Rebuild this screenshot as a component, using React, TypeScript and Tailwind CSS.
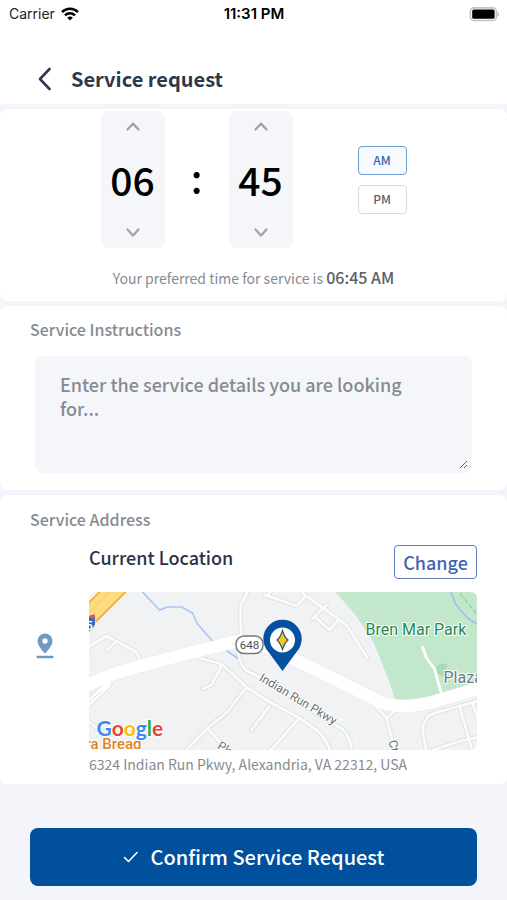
import { useState } from "react";

const pad = (n: number) => String(n).padStart(2, "0");

function Chevron({ up }: { up?: boolean }) {
  return (
    <svg width="14" height="9" viewBox="0 0 14 9" fill="none" stroke="#a0a1a4" strokeWidth="2.2" strokeLinecap="round" strokeLinejoin="round" aria-hidden="true">
      <path d={up ? "M1.5 7.5 7 1.5l5.5 6" : "M1.5 1.5 7 7.5l5.5-6"} />
    </svg>
  );
}

function Stepper({ label, value, max, min, onChange }: { label: string; value: number; max: number; min: number; onChange: (n: number) => void }) {
  return (
    <div className="flex w-16 flex-col items-center rounded-lg bg-[#f4f6fa]">
      <button type="button" aria-label={`Increase ${label}`} className="flex h-[30px] w-full items-center justify-center" onClick={() => onChange(value >= max ? min : value + 1)}>
        <Chevron up />
      </button>
      <input
        aria-label={label}
        inputMode="numeric"
        className="h-[75px] w-full bg-transparent text-center text-[39px] font-medium text-black outline-none"
        value={pad(value)}
        onChange={(e) => onChange(Math.min(max, Number(e.target.value) || min))}
      />
      <button type="button" aria-label={`Decrease ${label}`} className="flex h-8 w-full items-center justify-center" onClick={() => onChange(value <= min ? max : value - 1)}>
        <Chevron />
      </button>
    </div>
  );
}

function StatusBar() {
  return (
    <div className="grid h-7 grid-cols-3 items-center pr-2 pl-[9px] font-['Inter',sans-serif] text-sm text-black">
      <div className="flex items-center gap-1.5">
        <span className="text-[#222]">Carrier</span>
        <svg width="18" height="14" viewBox="0 0 18 14" fill="none" stroke="#000" strokeWidth="2.5" aria-hidden="true">
          <path d="M1 5.1C5.5.6 12.5.6 17 5.1" />
          <path d="M4 8.3c2.8-2.8 7.2-2.8 10 0" />
          <path d="M9 13.6 6.2 10.8a4 4 0 0 1 5.6 0Z" fill="#000" stroke="none" />
        </svg>
      </div>
      <span className="text-center text-[15px] font-semibold">11:31 PM</span>
      <svg className="justify-self-end" width="30" height="15" viewBox="0 0 30 15" aria-hidden="true">
        <rect x="1.4" y="0.9" width="26" height="12.6" rx="3.6" fill="#fff" stroke="#c4c4c4" strokeWidth="1.6" />
        <rect x="3.2" y="2.600" width="22.400" height="9.200" rx="1.6" fill="#000" />
        <path d="M28.6 5c1.6.5 1.6 4 0 4.600Z" fill="#aaa" />
      </svg>
    </div>
  );
}

const minorRoads = [
  "M111 66 L133 72 L158 95 L181 110 L211 126 L228 138 Q238 146 242 160",
  "M133 72 L131 78 L123 93 L114 97",
  "M158 95 L138 121 L119 136 L96 160",
  "M119 136 L140 160",
  "M181 114 L163 138",
  "M211 126 L188 152 L180 160",
  "M149 56 Q150 70 157 78 L173 86 L238 128 L254 137 Q263 146 263 160",
  "M160 -2 L153 12 Q151 20 153 46",
  "M176 3 L191 8 L208 14 L217 4 L212 -2",
  "M180 3 L183 -2",
  "M215 2 L258 33 L279 66",
  "M224 27 L238 13",
  "M227 25 L241 38 L250 28",
  "M-2 56 L18 44 L48 60 L53 72",
  "M27 50 L19 58",
  "M-2 83 L4 90",
  "M-2 128 L16 142",
  "M390 109 L346 121 Q335 125 334 138 L338 160",
  "M344 158 L372 149 L390 145",
  "M371 114 L384 160",
  "M384 111 L390 130",
  "M280 106 L298 126 L307 160",
  "M298 126 L310 116",
];

const mainRoad = "M-4 95 Q16 84 41 77 L101 61 L150 49 Q180 52 211 70 L258 93 L290 109 Q308 118 341 111 L392 96";

function LocationMap() {
  return (
    <svg className="block h-[158px] w-full rounded-md" viewBox="0 0 389 158" preserveAspectRatio="xMidYMid slice" role="img" aria-label="Map of the current location">
      <rect width="389" height="158" fill="#f0f2f3" />
      <path d="M247 0H389V97L308 112 301 90 285 50 267 23Z" fill="#c3e7cb" />
      <path d="M347 76q6-7 12-3l-4 12-6-4Z" fill="#a9d9b6" />
      <g fill="none" strokeLinejoin="round" strokeLinecap="round">
        <g stroke="#e0e2e4" strokeWidth="4.800">
          {minorRoads.map((d) => <path key={d} d={d} />)}
          <path d="M-2 113 L20 92" strokeWidth="8" />
          <path d={mainRoad} strokeWidth="13.600" stroke="#e8eaeb" />
        </g>
        <g stroke="#fafbfb" strokeWidth="2.800">
          {minorRoads.map((d) => <path key={d} d={d} />)}
          <path d="M-2 113 L20 92" strokeWidth="6" stroke="#fff" />
          <path d="M334 55 L338 66 L346 77 L353 102" stroke="#fff" />
        </g>
        <path d="M-2 113 13 99" stroke="#dadde0" strokeWidth="1" />
        <path d="M53 -1 71 18 79 15H93L104 21 109 32 124 49 149 66" stroke="#a9c5f8" strokeWidth="1.6" />
        <path d="M362 -1 367 12 379 26 390 33" stroke="#9dc0ea" strokeWidth="1.6" />
        <path d="M372 2 390 24" stroke="#91cfa3" strokeWidth="1.2" strokeDasharray="4 3" />
        <path d={mainRoad} strokeWidth="12.400" stroke="#fff" />
      </g>
      <path d="M-1 12 12 -1H38L8 29-1 36Z" fill="#fddc82" />
      <path d="M-1 12 12 -1M38 -1 8 29-1 35" fill="none" stroke="#f6ae2f" strokeWidth="1.800" />
      <path d="M22 -1 -1 22" stroke="#fbc653" strokeWidth="1" />
      <path d="M-6 24q6 2 12-1 2 5 1 9-2 6-9 9Z" fill="#3b69bd" stroke="#fff" strokeWidth="0.800" />
      <path d="M-6 23q6 2 12-1l1 4H-6Z" fill="#d95a55" />
      <g fontFamily="Roboto, sans-serif" fontWeight="500" stroke="#fff" strokeWidth="2" paintOrder="stroke" strokeLinejoin="round">
        <text x="-3" y="38" fontSize="13" fill="#fff" stroke="none">5</text>
        <text x="277" y="43" fontSize="16" fontWeight="400" fill="#2a8552">Bren Mar Park</text>
        <text x="355" y="91" fontSize="16" fontWeight="400" fill="#657b88">Plaza</text>
        <text transform="translate(170 88) rotate(31)" fontSize="12" fontWeight="400" fill="#6c6f72">Indian Run Pkwy</text>
        <text transform="translate(128 156) rotate(31)" fontSize="12" fontWeight="400" fill="#6c6f72">Pkwy</text>
        <text transform="translate(300 149) rotate(78)" fontSize="12" fontWeight="400" fill="#6c6f72">Ct</text>
        <text x="-3" y="157" fontSize="15" fill="#df8128">ra Bread</text>
      </g>
      <text x="8" y="144" fontFamily="Lato, sans-serif" fontWeight="700" fontSize="21" stroke="#fff" strokeWidth="2" paintOrder="stroke">
        <tspan fill="#4285f4">G</tspan><tspan fill="#ea4335">o</tspan><tspan fill="#fbbc05">o</tspan><tspan fill="#4285f4">g</tspan><tspan fill="#34a853">l</tspan><tspan fill="#ea4335">e</tspan>
      </text>
      <rect x="147.500" y="44" width="27" height="17.500" rx="8" fill="#fff" stroke="#73777a" strokeWidth="1.400" />
      <text x="161" y="57" textAnchor="middle" fontFamily="Roboto, sans-serif" fontSize="11.500" fill="#4c5054">648</text>
      <path d="M194 79 180 60A19.200 19.200 0 1 1 208 60Z" fill="#05509f" />
      <circle cx="194" cy="48" r="12.500" fill="#fff" />
      <path d="M194 38.500Q196 45.500 199.500 48 196 51 194 57.500 192 51 188.500 48 192 45.500 194 38.500Z" fill="#f8c623" stroke="#36587c" strokeWidth="1.200" />
    </svg>
  );
}

export default function App() {
  const [hour, setHour] = useState(6);
  const [minute, setMinute] = useState(45);
  const [period, setPeriod] = useState("AM");

  return (
    <div className="min-h-screen bg-[#f4f5fa] font-['Noto_Sans_CJK_SC',sans-serif] text-[#868b91]">
      <header className="bg-white">
        <StatusBar />
        <div className="flex h-[76px] items-end gap-5 pb-[13px] pl-[38px]">
          <button type="button" aria-label="Back" className="flex h-6 items-center">
            <svg width="13" height="24" viewBox="0 0 13 24" fill="none" stroke="#2c3b4d" strokeWidth="2.600" strokeLinecap="round" strokeLinejoin="round" aria-hidden="true">
              <path d="M11.500 2 2 12l9.500 10" />
            </svg>
          </button>
          <h1 className="text-xl leading-6 font-bold text-[#2c3a4b]">Service request</h1>
        </div>
      </header>

      <main className="mt-[5px] flex flex-col gap-[5px]">
        <section className="rounded-lg bg-white pt-0.5 pb-[13px]">
          <div className="flex justify-center">
            <Stepper label="Hour" value={hour} min={1} max={12} onChange={setHour} />
            <span className="w-16 self-center pb-1 text-center text-[39px] leading-none font-medium text-black">:</span>
            <Stepper label="Minute" value={minute} min={0} max={59} onChange={setMinute} />
            <div className="ml-[65px] flex w-[49px] flex-col justify-center gap-2.5">
              {["AM", "PM"].map((p) => (
                <button
                  key={p}
                  type="button"
                  aria-pressed={period === p}
                  onClick={() => setPeriod(p)}
                  className={period === p
                    ? "h-[29px] rounded border border-[#6c9bd0] bg-[#f6faff] text-xs font-medium text-[#3666a8]"
                    : "h-[29px] rounded border border-[#d9dadc] bg-white text-xs font-medium text-[#5f6368]"}
                >
                  {p}
                </button>
              ))}
            </div>
          </div>
          <p className="mt-[19px] text-center text-sm leading-5">
            Your preferred time for service is <strong className="text-base leading-5 font-medium text-[#5c6066]">{pad(hour)}:{pad(minute)} {period}</strong>
          </p>
        </section>

        <section className="rounded-lg bg-white px-[30px] pt-[11px] pb-[17px]">
          <label htmlFor="instructions" className="block text-base leading-6 font-medium">Service Instructions</label>
          <div className="mx-[5px] mt-[15px] rounded-lg bg-[#f4f6fa] p-1">
            <textarea
              id="instructions"
              placeholder="Enter the service details you are looking for..."
              className="block h-[109px] w-full resize-y bg-transparent py-3 pr-10 pl-[21px] text-lg leading-6 font-medium text-[#2c3a4b] outline-none placeholder:text-[#868b91]"
            />
          </div>
        </section>

        <section className="rounded-lg bg-white px-[30px] pt-3 pb-2.5">
          <h2 className="text-base leading-6 font-medium">Service Address</h2>
          <div className="mt-3.5 flex">
            <div className="flex w-[59px] shrink-0 items-center pb-7 pl-1.5">
              <svg width="18" height="26" viewBox="0 0 18 26" fill="#6f9abf" aria-hidden="true">
                <path fillRule="evenodd" d="M9 .5a7.500 7.500 0 0 0-7.500 7.500C1.500 13.400 9 20.500 9 20.500S16.500 13.400 16.500 8A7.500 7.500 0 0 0 9 .5Zm0 4.800a2.700 2.700 0 1 1 0 5.400 2.700 2.700 0 0 1 0-5.400Z" />
                <rect x="0.500" y="22.800" width="17" height="2.400" rx="0.600" />
              </svg>
            </div>
            <div className="min-w-0 flex-1">
              <div className="flex items-start justify-between">
                <h3 className="text-lg leading-6 font-medium text-[#2c3347]">Current Location</h3>
                <button type="button" className="h-[34px] w-[83px] rounded border border-[#5b7fc0] bg-white text-lg leading-6 font-medium text-[#3f65ae]">Change</button>
              </div>
              <div className="mt-[13px]">
                <LocationMap />
              </div>
              <p className="mt-1 text-sm leading-5">6324 Indian Run Pkwy, Alexandria, VA 22312, USA</p>
            </div>
          </div>
        </section>
      </main>

      <footer className="px-[30px] pt-11 pb-3.5">
        <button type="button" className="flex h-[58px] w-full items-center justify-center gap-3 rounded-lg bg-[#00509d] text-xl font-medium text-white">
          <svg width="16" height="14" viewBox="0 0 16 14" fill="none" stroke="#fff" strokeWidth="1.600" strokeLinecap="round" strokeLinejoin="round" aria-hidden="true">
            <path d="M1.500 7.500 5.500 11.500 14 2.500" />
          </svg>
          Confirm Service Request
        </button>
      </footer>
    </div>
  );
}
